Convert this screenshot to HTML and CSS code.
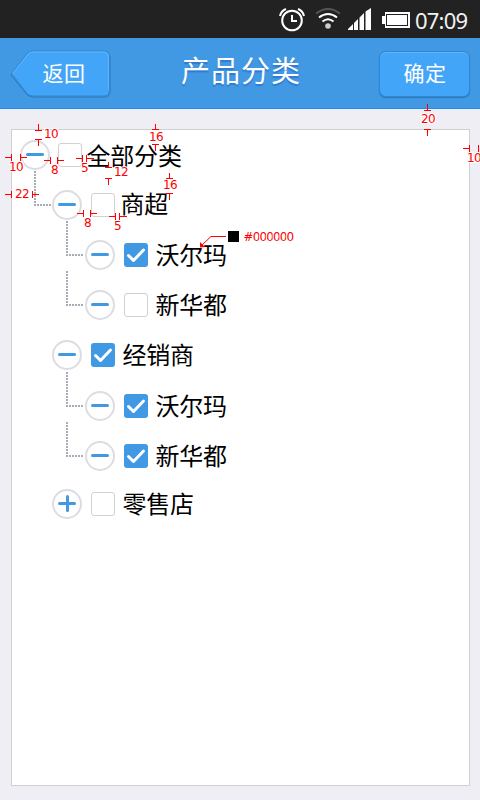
FILE: index.html
```html
<!DOCTYPE html>
<html lang="zh-CN">
<head>
<meta charset="utf-8">
<title>产品分类</title>
<link rel="stylesheet" href="styles.css">
</head>
<body>
<div class="screen">
  <div class="status">
    <svg class="status-icons" width="136" height="38" viewBox="275 0 136 38" fill="none" stroke="#fff" stroke-width="2">
      <circle cx="292" cy="20.500" r="9.800"/>
      <path d="M292 15v6h5M280 16q1-5 6-7M304 16q-1-5-6-7"/>
      <path d="M316 13.500q12-9 24 0" stroke="#555"/>
      <path d="M319 17.500q9-7 18 0M322.500 21.500q5.500-4.500 11 0"/>
      <circle cx="328" cy="26" r="2.800" fill="#ccc" stroke="none"/>
      <path d="M348 30V29l5-5v6zM354 30v-7l4-4v11zM359.500 30v-12.500l4.500-4.500v17zM365.500 30V11.500L371 8v22z" fill="#fff" stroke="none"/>
      <path d="M385 12h25v16h-25v-4h-3v-8h3z" fill="#fff" stroke="none"/>
      <rect x="386.500" y="14.500" width="21" height="11" stroke="#222" stroke-width="1"/>
    </svg>
    <span class="clock">07:09</span>
  </div>
  <header class="bar">
    <div class="back">
      <svg class="back-shape" width="102" height="50" viewBox="0 0 102 50">
        <path d="M1 25 17 4.500Q19.500 2 23 2H94Q100 2 100 8V41Q100 47 94 47H23Q19.500 47 17 44.500Z" fill="none" stroke="#2b78bb" stroke-width="1"/>
        <path d="M1.500 23.500 17 3.500Q19.500 1 23 1H94Q99.500 1 99.500 7.500V40Q99.500 46 94 46H23Q19.500 46 17 43.500Z" fill="#43a5f8" stroke="#2f86d2" stroke-width="1"/>
        <path d="M2.500 23.500 18 4.300Q20 2 23 2H94Q98.500 2 98.500 7.500V40" fill="none" stroke="#63b5fa"/>
      </svg>
      <span class="label">返回</span>
    </div>
    <h1 class="title">产品分类</h1>
    <div class="confirm"><span class="label">确定</span></div>
  </header>
  <main class="panel">
    <div class="row root"><i class="toggle"></i><i class="box"></i><span class="name">全部分类</span></div>
    <div class="row l1 linked up"><i class="toggle"></i><i class="box"></i><span class="name">商超</span></div>
    <div class="row l2 linked"><i class="toggle"></i><i class="box on"><svg width="24" height="24"><path d="M4.500 12.500 9.500 17.500 19.500 7"/></svg></i><span class="name">沃尔玛</span></div>
    <div class="row l2 linked"><i class="toggle"></i><i class="box"></i><span class="name">新华都</span></div>
    <div class="row l1 tall"><i class="toggle"></i><i class="box on"><svg width="24" height="24"><path d="M4.500 12.500 9.500 17.500 19.500 7"/></svg></i><span class="name">经销商</span></div>
    <div class="row l2 linked"><i class="toggle"></i><i class="box on"><svg width="24" height="24"><path d="M4.500 12.500 9.500 17.500 19.500 7"/></svg></i><span class="name">沃尔玛</span></div>
    <div class="row l2 linked short"><i class="toggle"></i><i class="box on"><svg width="24" height="24"><path d="M4.500 12.500 9.500 17.500 19.500 7"/></svg></i><span class="name">新华都</span></div>
    <div class="row l1"><i class="toggle plus"></i><i class="box"></i><span class="name">零售店</span></div>
  </main>
  <svg class="notes" width="480" height="800">
    <g class="marks">
      <path d="M38.500 124v6M35 130.500h7M35 139.500h7M38.500 140v6"/>
      <path d="M5 157.500h6M11.500 154v7M20.500 154v7M21 157.500h6"/>
      <path d="M44 160.500h6M50.500 157v7M57.500 157v7M58 160.500h6"/>
      <path d="M76 158.500h6M82.500 155v7M86.500 155v7M87 158.500h7"/>
      <path d="M5 194.500h6M11.500 191v7M32.500 191v7M33 194.500h6"/>
      <path d="M108.500 162v5M105 167.500h7M105 178.500h7M108.500 179v6"/>
      <path d="M155.500 124v5M152 129.500h7M152 144.500h7M155.500 145v6"/>
      <path d="M169.500 173v5M166 178.500h7M166 193.500h7M169.500 194v6"/>
      <path d="M77 213.500h6M83.500 210v7M90.500 210v7M91 213.500h6"/>
      <path d="M109 216.500h6M115.500 213v7M119.500 213v7M120 216.500h7"/>
      <path d="M427.500 104v6M424 110.500h7M424 129.500h7M427.500 130v6"/>
      <path d="M463 148.500h6M469.500 145v7M478.500 145v7"/>
      <path d="M226 236.500h-15L202 245"/>
      <path d="M200 247.500v-5.500l5 5z" class="tip"/>
    </g>
    <rect x="228" y="231" width="11" height="11"/>
    <g class="figures">
      <text x="44" y="138">10</text><text x="9" y="171">10</text><text x="51" y="174">8</text>
      <text x="81" y="172">5</text><text x="15" y="198">22</text><text x="114" y="176">12</text>
      <text x="149" y="141">16</text><text x="163" y="189">16</text><text x="84" y="227">8</text>
      <text x="114" y="230">5</text><text x="421" y="123">20</text><text x="467" y="162">10</text>
      <text x="243.500" y="241" textLength="50">#000000</text>
    </g>
  </svg>
</div>
</body>
</html>
```
FILE: styles.css
```css
* { box-sizing: border-box; }
body { margin: 0; }
.screen {
  position: relative;
  width: 480px;
  height: 800px;
  overflow: hidden;
  display: flex;
  flex-direction: column;
  background: #efeef4;
  font-family: "Noto Sans CJK SC", sans-serif;
}
.status {
  height: 38px;
  flex: none;
  display: flex;
  align-items: center;
  padding-left: 275px;
  background: #222;
  color: #f2f2f2;
}
.clock {
  margin: 2px 0 0 4px;
  font: 22px/24px "Noto Sans", sans-serif;
  letter-spacing: -0.8px;
}
.bar {
  height: 71px;
  flex: none;
  display: flex;
  justify-content: space-between;
  padding: 12px 10px 0;
  background: #4099e2;
  border-bottom: 1px solid #238ae6;
  color: #fff;
}
.back { width: 102px; height: 50px; display: grid; }
.back-shape, .back .label { grid-area: 1 / 1; }
.back .label { padding-left: 32.5px; line-height: 44px; }
.label { font-size: 21px; letter-spacing: 0.5px; }
.title {
  margin: -3px 0 0 -9px;
  font-size: 29px;
  font-weight: 400;
  line-height: 44px;
  letter-spacing: 1px;
  text-shadow: 0 2px 1px #3278d2;
}
.confirm {
  width: 91px;
  height: 46px;
  margin-top: 1px;
  padding-left: 23.5px;
  border: 1px solid #2f86d2;
  border-radius: 7px;
  background: #43a5f8;
  box-shadow: inset 0 1px #63b5fa, 0 1px 1px #2b78bb;
}
.confirm .label { display: block; line-height: 41px; }
.panel {
  width: 459px;
  height: 657px;
  margin: 20px 0 0 11px;
  padding-top: 10px;
  background: #fff;
  border: 1px solid #d0d0d0;
}
.row {
  height: 50px;
  display: flex;
  align-items: flex-start;
  padding-left: 8px;
}
.l1 { padding-left: 40px; }
.l2 { padding-left: 73px; }
.tall { height: 51px; }
.short { height: 48px; }
.linked::before {
  content: "";
  width: 17px;
  height: 35px;
  margin: -19px 0 0 -18px;
  background:
    repeating-linear-gradient(#a7adb4 0 2px, transparent 2px 3px) 0 0 / 2px 35px no-repeat,
    repeating-linear-gradient(90deg, #a7adb4 0 2px, transparent 2px 3px) 0 100% / 17px 2px no-repeat;
}
.linked .toggle { margin-left: 1px; }
.l2.linked::before { margin-left: -19px; }
.l2.linked .toggle { margin-left: 2px; }
.toggle {
  display: grid;
  width: 30px;
  height: 30px;
  flex: none;
  border: 2px solid #dddce3;
  border-radius: 50%;
}
.toggle::before, .plus::after {
  content: "";
  grid-area: 1 / 1;
  width: 18px;
  height: 3px;
  margin: 11px 0 0 4px;
  border-radius: 1.5px;
  background: #4099e2;
}
.plus::after { width: 3px; height: 17px; margin: 4px 0 0 11.5px; }
.box {
  width: 24px;
  height: 24px;
  flex: none;
  margin: 3px 0 0 9px;
  border: 1px solid #d1d1d1;
  border-radius: 3px;
}
.root .box { margin-left: 8px; }
.box.on { border: 0; background: #4099e2; }
.box svg { display: block; fill: none; stroke: #fff; stroke-width: 3; stroke-linecap: round; stroke-linejoin: round; }
.name {
  margin: -1px 0 0 7.5px;
  color: #000;
  font-size: 24px;
  line-height: 30px;
  letter-spacing: -0.2px;
}
.root .name { margin: 0 0 0 4.5px; }
.up .name { margin: -2px 0 0 5.5px; }
.notes { position: absolute; left: 0; top: 0; }
.marks { fill: none; stroke: #f00; stroke-width: 1; }
.marks .tip { fill: #f00; stroke: none; }
.figures {
  fill: #f00;
  stroke: #fff;
  stroke-width: 2px;
  paint-order: stroke;
  font: 12px "DejaVu Sans", sans-serif;
  letter-spacing: -0.6px;
}
```
